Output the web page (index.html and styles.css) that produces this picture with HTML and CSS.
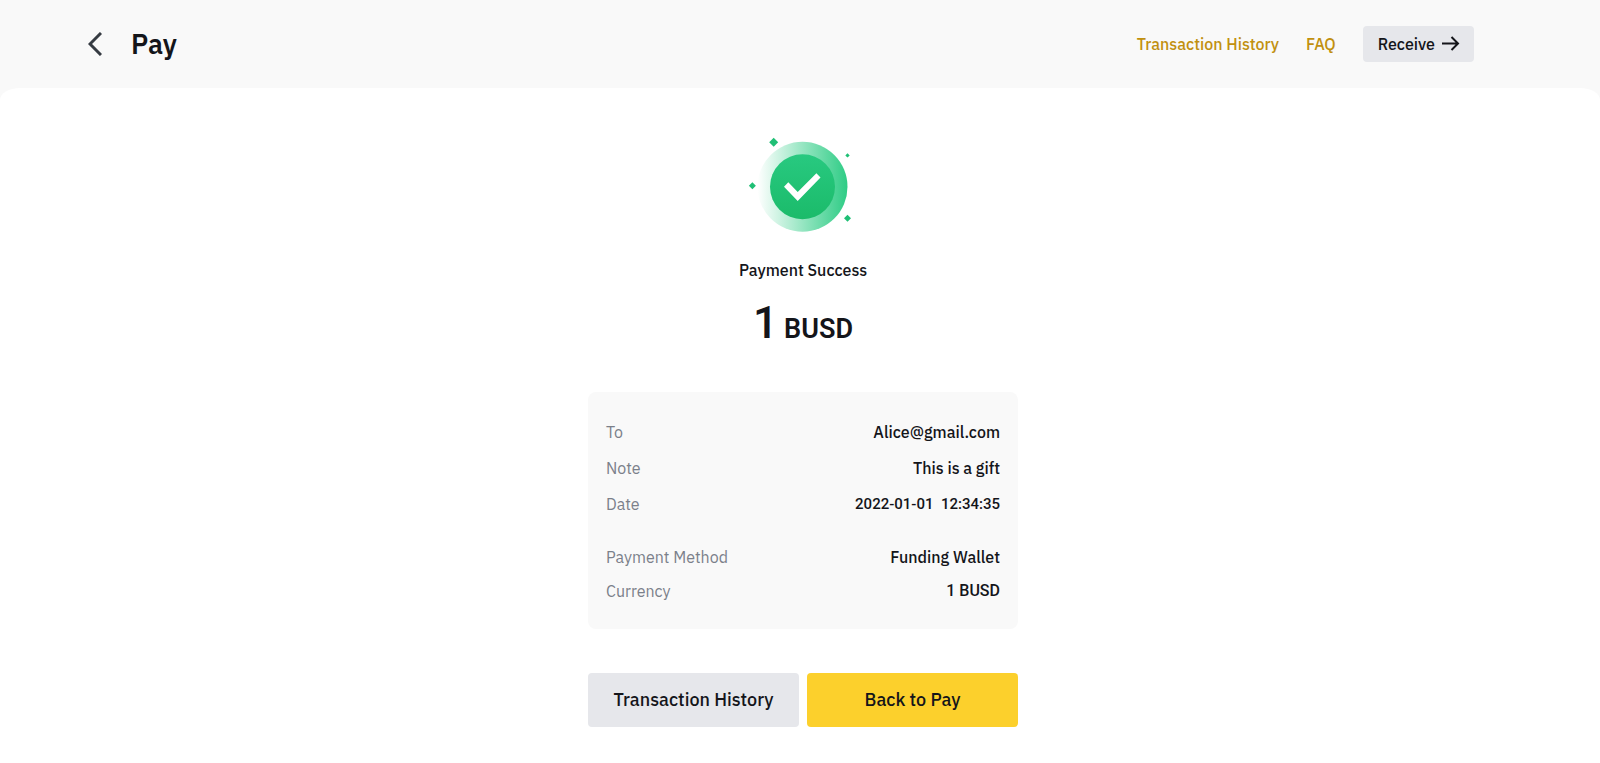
FILE: index.html
```html
<!DOCTYPE html>
<html lang="en">
<head>
    <meta charset="UTF-8">
    <meta name="viewport" content="width=device-width, initial-scale=1.0">
    <title>Pay</title>
    <link rel="stylesheet" href="styles.css">
</head>
<body>

    <header class="header">
        <div class="header-left">
            <a href="#" class="back" aria-label="Back">
                <svg width="14" height="24" viewBox="0 0 14 24" fill="none" stroke="#363b42" stroke-width="3">
                    <path d="M13 1 L2 12 L13 23"/>
                </svg>
            </a>
            <h1>Pay</h1>
        </div>
        <nav class="header-right">
            <a href="#">Transaction History</a>
            <a href="#">FAQ</a>
            <button type="button" class="receive">
                Receive
                <svg width="18" height="16" viewBox="0 0 18 16" fill="none" stroke="#14151a" stroke-width="2">
                    <path d="M0 7.5 H16 M9.5 1 L16 7.5 L9.5 14"/>
                </svg>
            </button>
        </nav>
    </header>

    <main class="content">
        <!-- Success icon -->
        <svg class="success-icon" width="140" height="120" viewBox="3 0 140 120">
            <defs>
                <linearGradient id="ring" x1="0" y1="0" x2="1" y2="0">
                    <stop offset="0" stop-color="#2ecc85" stop-opacity="0"/>
                    <stop offset="1" stop-color="#2ecc85"/>
                </linearGradient>
                <linearGradient id="disc" x1="0" y1="0" x2="0" y2="1">
                    <stop offset="0" stop-color="#28c980"/>
                    <stop offset="1" stop-color="#1bbb6a"/>
                </linearGradient>
            </defs>
            <circle cx="72.5" cy="61.7" r="45" fill="url(#ring)"/>
            <circle cx="72.5" cy="61.7" r="32.5" fill="url(#disc)"/>
            <path fill="#fff" d="M54 61.7 L58.3 57.3 L67.7 66.9 L86.4 48.3 L90.5 52.6 L67.7 76 Z"/>
            <g fill="#1fbf75">
                <path d="M43.7 12.8 L48.2 17.3 L43.7 21.8 L39.2 17.3 Z"/>
                <path d="M22.4 57.2 L25.9 60.7 L22.4 64.2 L18.9 60.7 Z"/>
                <path d="M117.5 28.2 L119.7 30.4 L117.5 32.6 L115.3 30.4 Z"/>
                <path d="M117.5 89.8 L121 93.3 L117.5 96.8 L114 93.3 Z"/>
            </g>
        </svg>

        <p class="status">Payment Success</p>
        <p class="amount">1 <span>BUSD</span></p>

        <!-- Payment details -->
        <div class="card">
            <dl>
                <div class="row"><dt>To</dt><dd>Alice@gmail.com</dd></div>
                <div class="row"><dt>Note</dt><dd>This is a gift</dd></div>
                <div class="row"><dt>Date</dt><dd class="number date">2022-01-01&nbsp; 12:34:35</dd></div>
            </dl>
            <dl class="method">
                <div class="row"><dt>Payment Method</dt><dd>Funding Wallet</dd></div>
                <div class="row"><dt>Currency</dt><dd class="number">1 BUSD</dd></div>
            </dl>
        </div>

        <div class="actions">
            <button type="button">Transaction History</button>
            <button type="button" class="primary">Back to Pay</button>
        </div>
    </main>

</body>
</html>
```
FILE: styles.css
```css
* {
    box-sizing: border-box;
}

body {
    margin: 0;
    background-color: #f9f9f9;
    color: #14151a;
    font-family: 'IBM Plex Sans', Roboto, sans-serif;
    font-size: 16px;
    font-weight: 500;
    line-height: 24px;
}

h1, p, dl, dd {
    margin: 0;
}

a {
    color: #c1900f;
    text-decoration: none;
}

button {
    border: none;
    border-radius: 4px;
    background-color: #e6e7eb;
    color: #14151a;
    font: inherit;
    cursor: pointer;
}

/* Header */
.header {
    display: flex;
    justify-content: space-between;
    align-items: center;
    height: 88px;
    padding: 0 126px 0 88px;
}

.header-left {
    display: flex;
    align-items: center;
    gap: 29px;
}

.back svg {
    display: block;
}

h1 {
    font-size: 27px;
    font-weight: 600;
    line-height: 32px;
}

.header-right {
    display: flex;
    align-items: center;
    gap: 27px;
}

.receive {
    display: flex;
    align-items: center;
    gap: 7px;
    height: 36px;
    padding: 0 14px 0 15px;
}

/* Content */
.content {
    display: flex;
    flex-direction: column;
    align-items: center;
    min-height: calc(100vh - 88px);
    padding: 37px 0 36px 6px;
    border-radius: 20px 20px 0 0 / 12px 12px 0 0;
    background-color: #fff;
}

.status {
    margin-top: 13px;
}

.amount {
    display: flex;
    align-items: baseline;
    gap: 6px;
    margin-top: 17px;
    font-family: Roboto, sans-serif;
    font-size: 44px;
    line-height: 48px;
}

.amount span {
    font-size: 27px;
    font-weight: 600;
}

.number {
    font-family: Roboto, sans-serif;
}

.date {
    font-size: 15px;
}

.card {
    width: 430px;
    max-width: 100%;
    margin-top: 39px;
    padding: 22px 18px 21px;
    border-radius: 8px;
    background-color: #f9f9f9;
}

.row {
    display: flex;
    justify-content: space-between;
    line-height: 36px;
}

.method {
    margin-top: 18px;
}

.method .row {
    line-height: 34px;
}

.row dt {
    color: #7b808a;
    font-weight: 400;
}

.actions {
    display: flex;
    gap: 8px;
    width: 430px;
    max-width: 100%;
    margin-top: 44px;
}

.actions button {
    flex: 1;
    height: 54px;
    font-size: 18px;
}

.actions .primary {
    background-color: #fcd02c;
}
```
